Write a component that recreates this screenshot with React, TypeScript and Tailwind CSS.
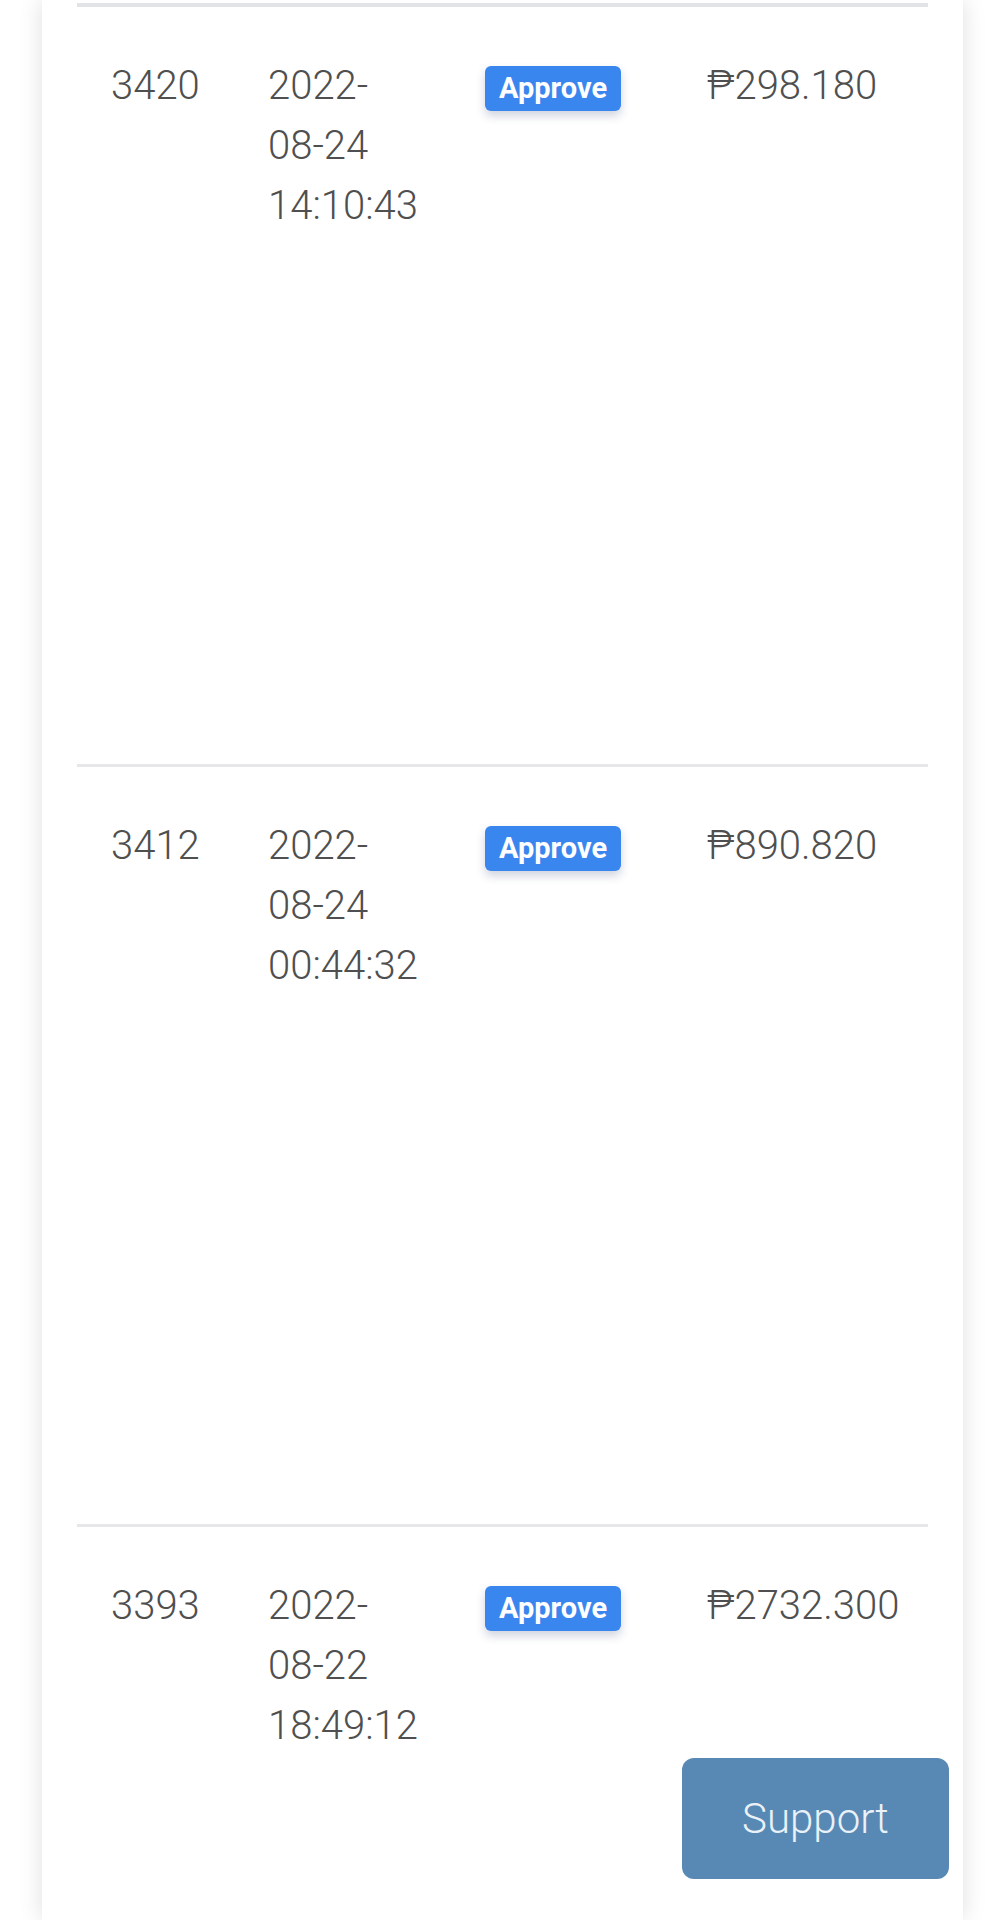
const ROWS = [
  { id: '3420', date: ['2022-', '08-24', '14:10:43'], amount: '₱298.180' },
  { id: '3412', date: ['2022-', '08-24', '00:44:32'], amount: '₱890.820' },
  { id: '3393', date: ['2022-', '08-22', '18:49:12'], amount: '₱2732.300' },
]

function Row({ row, last }: { row: (typeof ROWS)[number]; last: boolean }) {
  return (
    <div className={`flex h-[760px] pt-[49px] ${last ? '' : 'border-b-[3px] border-[#e7e7ea]'}`}>
      <div className="w-[157px] pl-[34px]">{row.id}</div>
      <div className="w-[217px] pl-[34px]">
        {row.date.map((d, i) => (
          <div key={i}>{d}</div>
        ))}
      </div>
      <div className="w-[222px] pl-[34px] pt-[10px]">
        <div
          className="flex h-[45px] w-[136px] items-center justify-center rounded-[6px] bg-[#3a86ef] text-[29px] font-bold leading-none text-white shadow-[0_5px_10px_rgba(40,60,110,0.22)]"
          style={{ fontFamily: 'Roboto, sans-serif' }}
        >
          Approve
        </div>
      </div>
      <div className="flex-1 pl-[34px]">{row.amount}</div>
    </div>
  )
}

export default function App() {
  return (
    <div
      className="relative h-[1920px] w-full overflow-hidden bg-white"
      style={{ fontFamily: 'Roboto, "Noto Sans", sans-serif' }}
    >
      <div className="mx-[42px] h-full bg-white px-[35px] pt-[3px] shadow-[0_0_22px_rgba(0,0,0,0.13)]">
        <div className="border-t-[4px] border-[#e2e3e7] text-[40px] font-light leading-[60px] text-[#4f4f4f]">
          {ROWS.map((row, i) => (
            <Row key={row.id} row={row} last={i === ROWS.length - 1} />
          ))}
        </div>
      </div>
      <button className="absolute bottom-[41px] right-[56px] flex h-[121px] w-[267px] items-center justify-center rounded-[12px] bg-[#5789b4] text-[42px] font-light text-[#eaf1f8]">
        Support
      </button>
    </div>
  )
}
